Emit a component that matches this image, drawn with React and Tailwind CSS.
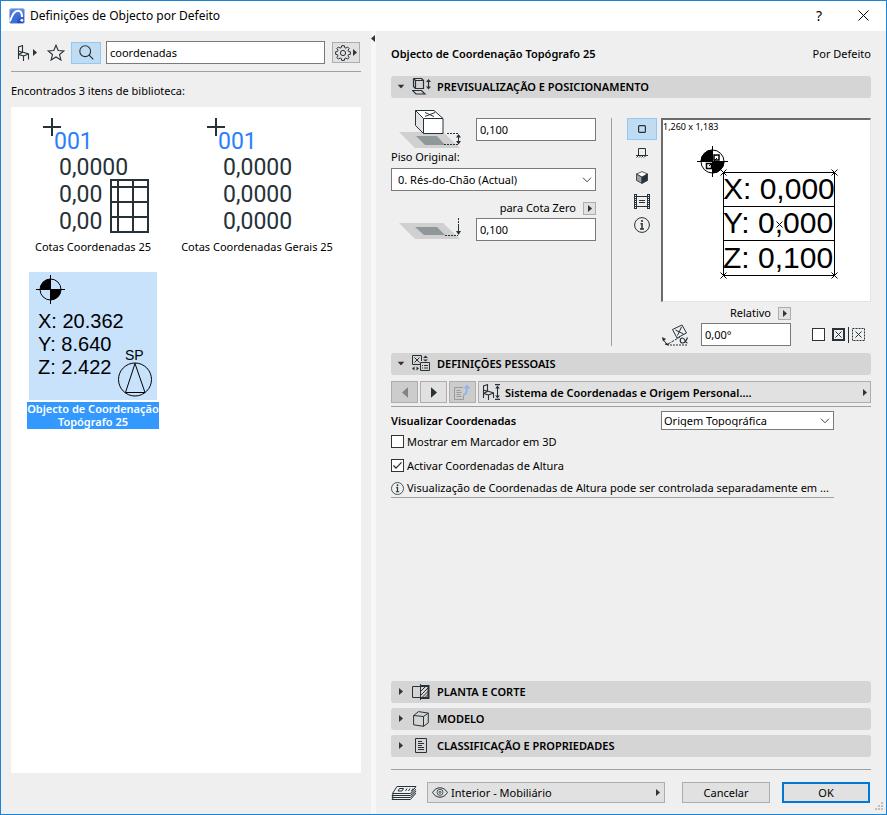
import React, { useState } from 'react';

const ink = '#263238';

/* ---------- small shared pieces ---------- */

const Arrow = ({ dir = 'right', color = '#333', large }) => {
  const points = {
    right: '0,0 4,3.5 0,7',
    left: '4,0 0,3.5 4,7',
  };
  return (
    <svg width={large ? 6 : 4} height={large ? 11 : 7} viewBox="0 0 4 7" className="shrink-0">
      <polygon points={points[dir]} fill={color} />
    </svg>
  );
};

const TextInput = ({ className = '', ...props }) => (
  <input
    type="text"
    className={`h-[23px] min-w-0 border border-[#7a7a7a] bg-white px-[3px] outline-none ${className}`}
    {...props}
  />
);

const Select = ({ options, className = '', padding = 'pl-[6px]', ...props }) => (
  <div className={`relative ${className}`}>
    <select className={`h-full w-full appearance-none border border-[#7a7a7a] bg-white pr-5 outline-none ${padding}`} {...props}>
      {options.map((option) => (
        <option key={option}>{option}</option>
      ))}
    </select>
    <svg width="10" height="6" viewBox="0 0 10 6" className="pointer-events-none absolute inset-y-0 right-1 my-auto" fill="none" stroke="#444">
      <path d="M1 .7 5 4.8 9 .7" />
    </svg>
  </div>
);

const Checkbox = ({ label, ...props }) => (
  <label className="flex items-center gap-[3px]">
    <span className="relative h-[13px] w-[13px] shrink-0">
      <input type="checkbox" className="peer block h-[13px] w-[13px] appearance-none border border-[#333] bg-white" {...props} />
      <svg width="13" height="13" viewBox="0 0 13 13" className="pointer-events-none absolute inset-0 hidden peer-checked:block" fill="none" stroke="#222" strokeWidth="1.2">
        <path d="M2.5 6.5 5 9.2 10.5 3.3" />
      </svg>
    </span>
    {label}
  </label>
);

const PopButton = (props) => (
  <button type="button" className="flex h-[13px] w-[13px] items-center justify-center border border-[#adadad] bg-[#e1e1e1]" {...props}>
    <Arrow />
  </button>
);

/* ---------- icons ---------- */

const AppIcon = () => (
  <svg width="16" height="16" viewBox="0 0 16 16">
    <defs>
      <linearGradient id="appIcon" x1="0" y1="0" x2="0" y2="1">
        <stop offset="0" stopColor="#5c93ec" />
        <stop offset="1" stopColor="#2443b0" />
      </linearGradient>
    </defs>
    <rect x=".5" y=".5" width="15" height="15" rx="2" fill="url(#appIcon)" stroke="#a9bde6" />
    <path d="M1 13.500C3 7 6 2.800 9 2.800c3 0 4 3 4 6.200" fill="none" stroke="#fff" strokeWidth="2" />
    <path d="M1.500 15C4 9 6 6.200 9 5.500L8 15z" fill="#3a70dc" />
    <circle cx="12.900" cy="12.300" r="1.400" fill="#fff" />
  </svg>
);

const ChairIcon = () => (
  <svg width="13" height="16" viewBox="0 0 13 16" fill="none" stroke={ink} strokeWidth="1.100">
    <path d="M1.500 14V2L5.500.6v6.700L1.500 9.500M5.500 7l6 2v5.500M1.500 9.500l5 1.500v5M6.500 11l5-2M1.500 6l4 1.300" />
  </svg>
);

const StarIcon = () => (
  <svg width="18" height="17" viewBox="0 0 18 17" fill="none" stroke={ink} strokeWidth="1.100">
    <path d="M9 1.200 11.200 6.500 16.900 6.900 12.500 10.500 13.900 16 9 13 4.100 16 5.500 10.500 1.100 6.900 6.800 6.500z" />
  </svg>
);

const SearchIcon = () => (
  <svg width="15" height="15" viewBox="0 0 15 15" fill="none" stroke={ink} strokeWidth="1.100">
    <circle cx="6.200" cy="6.200" r="5.400" />
    <path d="m10 10 4.300 4.300" />
  </svg>
);

const GearIcon = () => (
  <svg width="16" height="16" viewBox="0 0 16 16" fill="none" stroke={ink} strokeLinejoin="round">
    <path d="M6.700.7h2.600l.4 1.900 1.200.5 1.700-1.100 1.500 1.500L13 5.200l.5 1.200 1.900.4v2.500l-1.900.4-.5 1.200 1.100 1.700-1.500 1.500-1.700-1.100-1.200.5-.4 1.900H6.700l-.4-1.900-1.200-.5-1.700 1.100-1.500-1.500L3 10.900l-.5-1.200-1.900-.4V6.800l1.900-.4L3 5.200 1.900 3.500 3.400 2l1.700 1.100 1.200-.5z" />
    <circle cx="8" cy="8" r="2.600" />
  </svg>
);

const PreviewIcon = () => (
  <svg width="19" height="17" viewBox="0 0 19 17" fill="none" stroke={ink}>
    <path d="M3.500 2.500h8v8h-8zM1.500.5h8l2 2M1.500.5l2 2M1.500.5v8l2 2M.5 12.500h9l3.500 3.500H4zM16.500 2v8" strokeWidth="1.200" />
    <path d="M14 4l2.500-3L19 4zM14 8.500l2.500 3 2.500-3z" fill={ink} stroke="none" />
  </svg>
);

const CustomIcon = () => (
  <svg width="18" height="17" viewBox="0 0 18 17" fill="none" stroke={ink}>
    <path d="M8.500 9.500h-8v-9h9v5.500M2.500 2.500l5 5M7.500 2.500l-5 5M8.500 7.500h9v8h-9zM10 10.500h1M12 10.500h4M10 13h1M12 13h4" />
    <path d="M11 3l2.500-2.500L16 3zM11 4.500l2.500 2 2.500-2zM2.500 11.500v4L0 13.500zM4.500 11.500v4L7 13.500z" fill={ink} stroke="none" />
  </svg>
);

const PlanIcon = () => (
  <svg width="18" height="16" viewBox="0 0 18 16" fill="none" stroke={ink}>
    <path d="M9 2.500H.5v11H9M8.500 0v16" />
    <path d="M8.500 2h8v12h-8" strokeWidth="2" />
    <path d="m9 7 4.500-4.500M9 11l7.500-7.500M10 13.500l6.500-6.500M13 13.500l3.500-3.500" />
  </svg>
);

const ModelIcon = () => (
  <svg width="16" height="16" viewBox="0 0 16 16" fill="none" stroke={ink}>
    <path d="M.6 4.500 10.500 5.500v9.800L.6 13.800zM.6 4.500 5.500.6l9.800 1.500-4.800 3.400M15.300 2.100v9.700l-4.800 3.500" />
  </svg>
);

const DocIcon = () => (
  <svg width="12" height="15" viewBox="0 0 12 15" fill="none" stroke={ink}>
    <path d="M.5.5h11v14H.5zM3 3.500h4M3 5.500h6M3 7.500h4M3 9.500h6M3 11.500h6" />
  </svg>
);

const HeightIcon = () => (
  <svg width="62" height="40" viewBox="0 0 62 40" fill="none">
    <path d="M0 23h44l17 16H16z" fill="#d0d0d0" />
    <path d="M17 27h21l8 9H26z" fill="#8f979a" />
    <path d="M16.500 1.500H35l9 8v15H24.500l-8-8z" fill="#fff" />
    <path d="M16.500 1.500l8 8v15l-8-8z" fill="#e4e4e4" />
    <path d="M16.500 1.500H35l9 8v15H24.500l-8-8zM16.500 1.500l8 8v15M24.500 9.500H44" stroke={ink} />
    <path d="M26 3.500l9 4M36 3.500l-10 4" stroke={ink} />
    <path d="M48 24.500h11M45 35.500h14" stroke={ink} strokeDasharray="2 1" />
    <path d="M59.500 27v7" stroke={ink} />
    <path d="M57 28.500l2.500-3.500 2.500 3.500zM57 32l2.500 3.500L62 32z" fill={ink} />
  </svg>
);

const ZeroIcon = () => (
  <svg width="62" height="24" viewBox="0 0 62 24" fill="none">
    <path d="M0 5h44l17 16H16z" fill="#d0d0d0" />
    <path d="M16 9h22l8 8H25z" fill="#8f979a" />
    <path d="M46 17.500h13" stroke={ink} strokeDasharray="2 1" />
    <path d="M59.500 0v5" stroke={ink} strokeDasharray="2 1" />
    <path d="M59.500 6v9" stroke={ink} />
    <path d="M57 13l2.500 4 2.500-4z" fill={ink} />
  </svg>
);

const SquareIcon = () => (
  <svg width="8" height="8" viewBox="0 0 8 8" fill="none" stroke={ink}>
    <rect x=".6" y=".6" width="6.800" height="6.800" rx="1" strokeWidth="1.200" />
  </svg>
);

const ElevationIcon = () => (
  <svg width="12" height="10" viewBox="0 0 12 10" fill="none" stroke={ink}>
    <path d="M2.500 7V.5h7V7M0 7.500h12M2.500 7.500l-2 2M5 7.500l-2 2M7.500 7.500l-2 2M10 7.500l-2 2" />
  </svg>
);

const CubeIcon = () => (
  <svg width="12" height="13" viewBox="0 0 12 13" stroke={ink} strokeWidth=".8" strokeLinejoin="round">
    <path d="M6 .6 11.500 3 6 6.200.5 3z" fill="#fff" />
    <path d="M.5 3 6 6.200v6.200L.5 9.500z" fill="#9aa0a3" />
    <path d="M11.500 3 6 6.200v6.200l5.500-2.900z" fill={ink} />
  </svg>
);

const FilmIcon = () => (
  <svg width="16" height="15" viewBox="0 0 16 15" fill="none" stroke={ink}>
    <path d="M1.500 0v15M14.500 0v15" strokeWidth="3" />
    <path d="M1.500 1v14M14.500 1v14" stroke="#efefef" strokeDasharray="1 1" />
    <path d="M3 2.500h10M3 12.500h10M5 6.500h6M5 8.500h6" />
  </svg>
);

const InfoIcon = ({ size = 16 }) => (
  <svg width={size} height={size} viewBox="0 0 16 16" fill="none" stroke={ink} className="shrink-0">
    <circle cx="8" cy="8" r="7.400" />
    <path d="M6.500 6.800H8v5M6 12h4" strokeWidth="1.500" />
    <circle cx="8" cy="4" r="1.100" fill={ink} stroke="none" />
  </svg>
);

const AngleIcon = () => (
  <svg width="28" height="22" viewBox="0 0 28 22" fill="none" stroke={ink}>
    <path d="M11.500 5.500 21 1l4.500 8-9.500 5zM14.500 6l8 4M20.500 3l-4 8.500" />
    <path d="M7 20 19 13" strokeDasharray="3 1" />
    <path d="M6 21h20" strokeDasharray="2 1" />
    <path d="M2 15.500 6 20.500" />
    <path d="M1 13l4 2-3 2.500zM5 18.500l3.500 2.500H4z" fill={ink} stroke="none" />
    <path d="M26.500 13.500c-1 3-3 5.500-5 5.500-3 0-3-5 0-5 2.500 0 2.500 5 5 5" strokeWidth="1.200" />
  </svg>
);

const BoxXIcon = () => (
  <svg width="13" height="13" viewBox="0 0 13 13" fill="none" stroke={ink}>
    <rect x="1" y="1" width="11" height="11" strokeWidth="2" />
    <path d="m3.500 3.500 6 6M9.500 3.500l-6 6" />
  </svg>
);

const DashedXIcon = () => (
  <svg width="13" height="13" viewBox="0 0 13 13" fill="none" stroke={ink}>
    <rect x=".5" y=".5" width="12" height="12" strokeDasharray="2 1" />
    <path d="m3.500 3.500 6 6M9.500 3.500l-6 6" />
  </svg>
);

const TransferIcon = () => (
  <svg width="17" height="16" viewBox="0 0 17 16" fill="none">
    <path d="M9 3.500H.5v12h9V12M2.500 6.500h4M2.500 8.500h5M2.500 10.500h4M2.500 12.500h5" stroke="#9a9a9a" />
    <path d="M9 11c3.500-.5 4-3 4-7" stroke="#8db7ea" strokeWidth="2" />
    <path d="M9.500 4.500 13 .5l3.500 4z" fill="#8db7ea" />
  </svg>
);

const ChairHeightIcon = () => (
  <svg width="19" height="16" viewBox="0 0 19 16" fill="none" stroke={ink} strokeWidth="1.100">
    <path d="M1.500 14V2L5.500.6v6.700L1.500 9.500M5.500 7l6 2v5M1.500 9.500l5 1.500v5M6.500 11l5-2M1.500 6l4 1.300M13 .6h5M13 15.400h5M15.500 3v10" />
    <path d="M13.200 4.500l2.300-3 2.300 3zM13.200 11.500l2.300 3 2.300-3z" fill={ink} stroke="none" />
  </svg>
);

const LayersIcon = () => (
  <svg width="26" height="16" viewBox="0 0 26 16" fill="none" stroke={ink}>
    <path d="M6 1.500h19L19.500 8.500H1.500zM2.500 8.500l-1.500 2h18.500l5.500-6.500M2.500 10.500l-1.500 2h18.500l5.500-6.500M2.500 12.500l-1.500 2h18.500l5.500-6.500" strokeLinejoin="round" />
    <path d="M8.500 3.500h4L11 6H7zM16 3.500l-1.500 2.500M19 3.500l-1.500 2.500M22 3.500l-1.500 2.500" />
  </svg>
);

const EyeIcon = () => (
  <svg width="16" height="11" viewBox="0 0 16 11" fill="none" stroke={ink}>
    <path d="M.6 5.500C4-.8 12-.8 15.400 5.500 12 11.800 4 11.800.6 5.500z" />
    <circle cx="8" cy="5.300" r="3" strokeWidth=".8" />
    <circle cx="8" cy="5.300" r="1" strokeWidth=".8" />
  </svg>
);

/* ---------- library thumbnails ---------- */

const Survey = ({ cx, cy, r }) => (
  <g>
    <circle cx={cx} cy={cy} r={r} fill="none" stroke="#000" />
    <path d={`M${cx} ${cy}h${-r}a${r} ${r} 0 0 1 ${r} ${-r}z M${cx} ${cy}h${r}a${r} ${r} 0 0 1 ${-r} ${r}z`} fill="#000" />
    <path d={`M${cx - r - 4} ${cy}h${2 * r + 8}M${cx} ${cy - r - 4}v${2 * r + 8}`} stroke="#000" />
  </g>
);

const CoordinateThumb = ({ lines, table }) => (
  <svg width="128" height="128" viewBox="0 0 128 128">
    <path d="M14 17h18M23 8v18" stroke={ink} strokeWidth="2" />
    <g className="font-['Roboto',sans-serif] text-[23px]">
      <text x="25" y="39" fill="#2a7fff">001</text>
      {lines.map((line, i) => (
        <text key={i} x="30" y={65 + i * 27} fill={ink}>{line}</text>
      ))}
    </g>
    {table && (
      <path d="M82 70h37v52H82zM89 70v52M104 70v52M82 77h37M82 92h37M82 107h37" fill="none" stroke={ink} strokeWidth="2" />
    )}
  </svg>
);

const SurveyThumb = () => (
  <svg width="128" height="128" viewBox="0 0 128 128" className="bg-[#c8e2fc]">
    <Survey cx={21.5} cy={17.5} r={10.5} />
    <g className="font-['Liberation_Sans',Arial,sans-serif] text-[20px]">
      <text x="9" y="56">X: 20.362</text>
      <text x="9" y="79">Y: 8.640</text>
      <text x="9" y="102">Z: 2.422</text>
    </g>
    <text x="96" y="88" className="font-['Liberation_Sans',Arial,sans-serif] text-[14px]">SP</text>
    <g fill="none" stroke="#000">
      <circle cx="106" cy="107.500" r="16.500" />
      <path d="M106 91.500 96.500 120.500h19.500z" />
    </g>
  </svg>
);

const libraryItems = [
  { id: 1, name: 'Cotas Coordenadas 25', thumb: <CoordinateThumb lines={['0,0000', '0,00', '0,00']} table /> },
  { id: 2, name: 'Cotas Coordenadas Gerais 25', thumb: <CoordinateThumb lines={['0,0000', '0,0000', '0,0000']} /> },
  { id: 3, name: 'Objecto de Coordenação Topógrafo 25', thumb: <SurveyThumb /> },
];

const ObjectPreview = () => (
  <svg width="207" height="181" viewBox="0 0 207 181" className="max-w-full" fill="none" stroke="#000">
    <Survey cx={49.5} cy={41.5} r={11.5} />
    <path d="M51 35h5v5h-5zM43.500 43.500h5v5h-5z" strokeWidth="1.500" fill="#fff" />
    <path d="m46 46 8-8" />
    <path d="M60.500 52.500h111v103h-111zM60.500 86.500h111M60.500 120.500h111" />
    <path d="m57.500 49.500 6 6m0-6-6 6M168.500 49.500l6 6m0-6-6 6M57.500 152.500l6 6m0-6-6 6M168.500 152.500l6 6m0-6-6 6" />
    <g className="font-['Liberation_Sans',Arial,sans-serif] text-[30px]" fill="#000" stroke="none">
      <text x="60" y="79">X: 0,000</text>
      <text x="60" y="113">Y: 0,000</text>
      <text x="60" y="148">Z: 0,100</text>
    </g>
    <path d="m113.500 101.500 6 6m0-6-6 6" />
  </svg>
);

/* ---------- sections ---------- */

const SectionHeader = ({ icon, title, open, onClick }) => (
  <button
    type="button"
    aria-expanded={open}
    onClick={onClick}
    className="flex h-[22px] w-full shrink-0 items-center rounded-[3px] bg-[#d5d5d5] pb-px pl-[6px] text-left font-semibold"
  >
    <span className={`flex w-2 justify-center ${open ? 'rotate-90' : ''}`}>
      <Arrow />
    </span>
    <span className="mx-[6px] flex w-5 justify-center">{icon}</span>
    {title}
  </button>
);

const viewModes = [
  { id: 'plan', label: 'Planta', icon: <SquareIcon /> },
  { id: 'elevation', label: 'Alçado', icon: <ElevationIcon /> },
  { id: 'model', label: '3D', icon: <CubeIcon /> },
  { id: 'image', label: 'Imagem', icon: <FilmIcon /> },
  { id: 'info', label: 'Informação', icon: <InfoIcon /> },
];

const Positioning = () => {
  const [view, setView] = useState('plan');

  return (
    <div className="grid grid-cols-[205fr_1px_244fr] gap-x-[15px] pt-[11px] pb-[7px]">
      <div className="flex min-w-0 flex-col">
        <div className="flex items-start justify-between">
          <div className="pl-2"><HeightIcon /></div>
          <TextInput aria-label="Altura ao piso" defaultValue="0,100" className="mt-[9px] w-[120px]" />
        </div>
        <label htmlFor="story" className="leading-4">Piso Original:</label>
        <Select id="story" className="mt-[3px] h-[23px]" options={['0. Rés-do-Chão (Actual)']} />
        <div className="mt-[9px] flex items-center justify-end gap-[7px] leading-4">
          <label htmlFor="zero">para Cota Zero</label>
          <PopButton aria-label="Referência de cota" />
        </div>
        <div className="mt-[2px] flex items-start justify-between">
          <div className="pl-2"><ZeroIcon /></div>
          <TextInput id="zero" defaultValue="0,100" className="w-[120px]" />
        </div>
      </div>

      <div className="mt-[9px] bg-[#a0a0a0]" />

      <div className="mt-[9px] flex min-w-0 gap-1">
        <div className="flex w-[30px] shrink-0 flex-col gap-[2px]">
          {viewModes.map((mode) => (
            <button
              key={mode.id}
              type="button"
              aria-label={mode.label}
              onClick={() => setView(mode.id)}
              className={`flex h-[22px] w-full items-center justify-center border ${
                view === mode.id ? 'border-[#90c8f6] bg-[#c0dcf3]' : 'border-transparent'
              }`}
            >
              {mode.icon}
            </button>
          ))}
        </div>

        <div className="flex min-w-0 flex-1 flex-col">
          <div className="relative border-t-2 border-r border-b border-l-2 border-t-[#6b6b6b] border-r-[#e3e3e3] border-b-[#e3e3e3] border-l-[#6b6b6b] bg-white">
            <ObjectPreview />
            <span className="absolute top-px left-0 text-[9px] leading-3">1,260 x 1,183</span>
          </div>
          <div className="mt-[3px] flex items-center justify-end gap-[7px] pr-20 leading-4">
            <label htmlFor="angle">Relativo</label>
            <PopButton aria-label="Tipo de ângulo" />
          </div>
          <div className="mt-[2px] flex items-center">
            <AngleIcon />
            <TextInput id="angle" defaultValue="0,00°" className="ml-3 w-[90px]" />
            <div className="ml-auto flex items-center gap-[7px] pr-[6px]">
              <Checkbox aria-label="Espelhar" />
              <BoxXIcon />
              <span className="-mx-1 h-4 w-px bg-[#263238]" />
              <DashedXIcon />
            </div>
          </div>
        </div>
      </div>
    </div>
  );
};

const pageButton = 'flex h-[22px] items-center justify-center border border-[#adadad]';

const CustomSettings = () => {
  const [marker, setMarker] = useState(false);
  const [height, setHeight] = useState(true);

  return (
    <div className="pt-[6px]">
      <div className="flex gap-[2px] border-b border-[#a0a0a0] pb-[3px]">
        <button type="button" disabled aria-label="Anterior" className={`${pageButton} w-[27px] bg-[#cccccc]`}>
          <Arrow dir="left" color="#838383" large />
        </button>
        <button type="button" aria-label="Seguinte" className={`${pageButton} w-[27px] bg-[#e1e1e1]`}>
          <Arrow large color={ink} />
        </button>
        <button type="button" disabled aria-label="Transferir" className={`${pageButton} w-[27px] bg-[#cccccc]`}>
          <TransferIcon />
        </button>
        <button type="button" className={`${pageButton} flex-1 gap-1 bg-[#e1e1e1] px-[3px] font-semibold`}>
          <ChairHeightIcon />
          <span className="flex-1 text-left">Sistema de Coordenadas e Origem Personal....</span>
          <Arrow />
        </button>
      </div>

      <div className="mr-[37px] border-b border-[#a0a0a0] pb-px">
        <div className="flex items-center justify-between pt-1">
          <label htmlFor="origin" className="font-semibold">Visualizar Coordenadas</label>
          <Select id="origin" className="h-[19px] w-[173px]" padding="pl-[2px]" options={['Origem Topográfica']} />
        </div>
        <div className="flex h-[22px] items-center">
          <Checkbox label="Mostrar em Marcador em 3D" checked={marker} onChange={(e) => setMarker(e.target.checked)} />
        </div>
        <div className="flex h-[26px] items-center">
          <Checkbox label="Activar Coordenadas de Altura" checked={height} onChange={(e) => setHeight(e.target.checked)} />
        </div>
        <p className="mt-[2px] flex items-center gap-[3px] leading-4">
          <InfoIcon size={13} />
          Visualização de Coordenadas de Altura pode ser controlada separadamente em ...
        </p>
      </div>
    </div>
  );
};

/* ---------- page ---------- */

const App = () => {
  const [query, setQuery] = useState('coordenadas');
  const [selected, setSelected] = useState(3);
  const [open, setOpen] = useState({ preview: true, custom: true });

  const toggle = (key) => setOpen((prev) => ({ ...prev, [key]: !prev[key] }));

  return (
    <div className="flex min-h-screen flex-col border border-[#1883d7] bg-[#efefef] font-['Noto_Sans',sans-serif] text-[11px] leading-[13px] text-black">
      <header className="flex h-[30px] items-center bg-white pr-[17px] pb-px pl-2">
        <AppIcon />
        <h1 className="ml-[5px] flex-1 text-[12px]">Definições de Objecto por Defeito</h1>
        <button type="button" aria-label="Ajuda" className="mr-9 text-[14px]">?</button>
        <button type="button" aria-label="Fechar">
          <svg width="11" height="11" viewBox="0 0 11 11" stroke="#000" fill="none">
            <path d="m.5.5 10 10M10.500.5l-10 10" />
          </svg>
        </button>
      </header>

      <div className="grid flex-1 grid-cols-[370fr_5px_510fr]">
        <aside className="flex min-w-0 flex-col px-[10px] pt-[10px] pb-[41px]">
          <div className="flex items-center border-b border-[#a0a0a0] pb-[7px]">
            <button type="button" aria-label="Tipo de objecto" className="ml-[6px] flex items-center gap-[3px]">
              <ChairIcon />
              <Arrow />
            </button>
            <button type="button" aria-label="Favoritos" className="ml-[10px]"><StarIcon /></button>
            <button type="button" aria-label="Procurar" className="ml-[6px] flex h-[22px] w-[30px] items-center justify-center border border-[#90c8f6] bg-[#c0dcf3]">
              <SearchIcon />
            </button>
            <TextInput
              aria-label="Procurar na biblioteca"
              value={query}
              onChange={(e) => setQuery(e.target.value)}
              className="ml-[5px] flex-1"
            />
            <button type="button" aria-label="Opções" className="mr-px ml-[7px] flex h-[21px] w-7 items-center justify-center gap-[2px] border border-[#adadad] bg-[#e1e1e1]">
              <GearIcon />
              <Arrow />
            </button>
          </div>

          <p className="mt-3 mb-[10px]">Encontrados 3 itens de biblioteca:</p>

          <ul className="flex flex-1 flex-wrap content-start gap-y-1 bg-white pt-[3px]">
            {libraryItems.map((item) => (
              <li key={item.id} className="h-[158px] w-[164px]">
                <button type="button" onClick={() => setSelected(item.id)} className="flex w-full flex-col items-center gap-[2px]">
                  {item.thumb}
                  <span className={selected === item.id ? 'w-[132px] bg-[#3399ff] pb-px font-semibold text-white' : ''}>
                    {item.name}
                  </span>
                </button>
              </li>
            ))}
          </ul>
        </aside>

        <div className="bg-[#f7f7f7] pt-1">
          <button type="button" aria-label="Ocultar painel" className="block">
            <Arrow dir="left" />
          </button>
        </div>

        <main className="flex min-w-0 flex-col px-[15px] pb-[11px]">
          <div className="flex items-center justify-between py-4">
            <h2 className="font-semibold">Objecto de Coordenação Topógrafo 25</h2>
            <span>Por Defeito</span>
          </div>

          <SectionHeader icon={<PreviewIcon />} title="PREVISUALIZAÇÃO E POSICIONAMENTO" open={open.preview} onClick={() => toggle('preview')} />
          {open.preview && <Positioning />}

          <SectionHeader icon={<CustomIcon />} title="DEFINIÇÕES PESSOAIS" open={open.custom} onClick={() => toggle('custom')} />
          {open.custom && <CustomSettings />}

          <div className="mt-auto flex flex-col gap-[5px] pt-4">
            <SectionHeader icon={<PlanIcon />} title="PLANTA E CORTE" />
            <SectionHeader icon={<ModelIcon />} title="MODELO" />
            <SectionHeader icon={<DocIcon />} title="CLASSIFICAÇÃO E PROPRIEDADES" />
          </div>

          <footer className="mt-3 flex items-center border-t border-[#a0a0a0] pt-3 pr-px">
            <LayersIcon />
            <button type="button" className="ml-[10px] flex h-[21px] flex-1 items-center gap-[3px] border border-[#adadad] bg-[#e1e1e1] px-1 text-left">
              <EyeIcon />
              <span className="flex-1">Interior - Mobiliário</span>
              <Arrow />
            </button>
            <button type="button" className="ml-[17px] h-[21px] w-[88px] border border-[#adadad] bg-[#e1e1e1]">Cancelar</button>
            <button type="button" className="ml-3 h-[21px] w-[88px] border-2 border-[#0078d7] bg-[#e1e1e1]">OK</button>
          </footer>
        </main>
      </div>

      <svg width="9" height="9" viewBox="0 0 9 9" fill="#bfbfbf" className="absolute right-1 bottom-1">
        <path d="M7 0h2v2H7zM7 3h2v2H7zM4 3h2v2H4zM7 6h2v2H7zM4 6h2v2H4zM1 6h2v2H1z" />
      </svg>
    </div>
  );
};

export default App;
